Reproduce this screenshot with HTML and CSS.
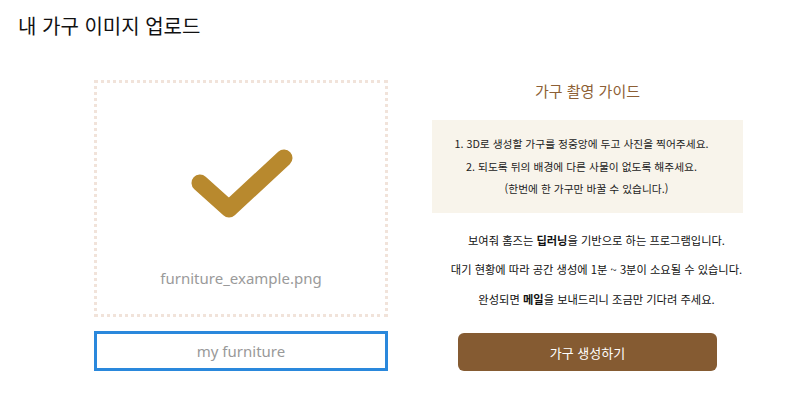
FILE: index.html
```html
<!DOCTYPE html>
<html lang="ko">
<head>
<meta charset="utf-8">
<title>내 가구 이미지 업로드</title>
<link rel="stylesheet" href="styles.css">
</head>
<body>
<h1 class="page-title">내 가구 이미지 업로드</h1>
<main class="upload-layout">
  <section class="left-col">
    <div class="drop-zone">
      <svg class="check-icon" width="110" height="80" viewBox="0 0 110 80" aria-hidden="true">
        <path d="M13 36 L42 62 L97 11" fill="none" stroke="#b8892e" stroke-width="17" stroke-linecap="round" stroke-linejoin="round"/>
      </svg>
      <p class="file-name">furniture_example.png</p>
    </div>
    <input class="name-input" type="text" placeholder="my furniture">
  </section>
  <section class="right-col">
    <h2 class="guide-title">가구 촬영 가이드</h2>
    <div class="guide-box">
      <p class="guide-line">1. 3D로 생성할 가구를 정중앙에 두고 사진을 찍어주세요.</p>
      <p class="guide-line">2. 되도록 뒤의 배경에 다른 사물이 없도록 해주세요.</p>
      <p class="guide-note">(한번에 한 가구만 바꿀 수 있습니다.)</p>
    </div>
    <div class="info">
      <p>보여줘 홈즈는 <strong>딥러닝</strong>을 기반으로 하는 프로그램입니다.</p>
      <p>대기 현황에 따라 공간 생성에 1분 ~ 3분이 소요될 수 있습니다.</p>
      <p>완성되면 <strong>메일</strong>을 보내드리니 조금만 기다려 주세요.</p>
    </div>
    <button class="create-btn" type="button">가구 생성하기</button>
  </section>
</main>
</body>
</html>
```
FILE: styles.css
```css
* { box-sizing: border-box; }
html, body { margin: 0; padding: 0; background: #fff; }
body {
  font-family: "Noto Sans CJK KR", "Noto Sans", sans-serif;
  color: #111;
}
.page-title {
  margin: 0;
  padding: 11px 0 0 18px;
  font-size: 20px;
  font-weight: 400;
  line-height: 30px;
  color: #111;
}
.upload-layout {
  display: flex;
  align-items: flex-start;
  gap: 44px;
  padding: 39px 0 0 94px;
}
.left-col {
  width: 294px;
  display: flex;
  flex-direction: column;
  gap: 14px;
}
.drop-zone {
  height: 237px;
  border: 3px dotted #f1e3da;
  display: flex;
  flex-direction: column;
  align-items: center;
  padding-top: 64px;
}
.check-icon { display: block; margin-left: 2px; }
.file-name {
  margin: 41px 0 0;
  font-family: "Noto Sans", sans-serif;
  font-size: 15px;
  color: #9a9a9a;
  line-height: 20px;
}
.name-input {
  width: 294px;
  height: 40px;
  border: 3px solid #2a88dc;
  border-radius: 0;
  outline: none;
  text-align: center;
  font-family: "Noto Sans", sans-serif;
  font-size: 15px;
  color: #999;
  padding: 0;
}
.name-input::placeholder { color: #999; }
.right-col {
  width: 311px;
  display: flex;
  flex-direction: column;
  align-items: center;
}
.guide-title {
  margin: 0;
  font-size: 15px;
  font-weight: 400;
  color: #8d5f35;
  line-height: 22px;
}
.guide-box {
  align-self: stretch;
  margin-top: 18px;
  background: #f8f4eb;
  padding: 13px 0 12px;
  text-align: center;
}
.guide-box p {
  margin: 0;
  font-size: 10.75px;
  line-height: 22.5px;
  color: #222;
}
.guide-line { padding-right: 12px; }
.guide-note { padding-right: 2px; }
.info {
  margin-top: 18px;
  padding-left: 18px;
  text-align: center;
}
.info p {
  margin: 0 0 10px;
  font-size: 11.25px;
  line-height: 19.5px;
  color: #111;
  white-space: nowrap;
}
.info strong { font-weight: 700; }
.create-btn {
  margin-top: 14px;
  width: 259px;
  height: 38px;
  border: none;
  border-radius: 6px;
  background: #855b32;
  color: #fff;
  font-family: "Noto Sans CJK KR", sans-serif;
  font-size: 13px;
}
```
